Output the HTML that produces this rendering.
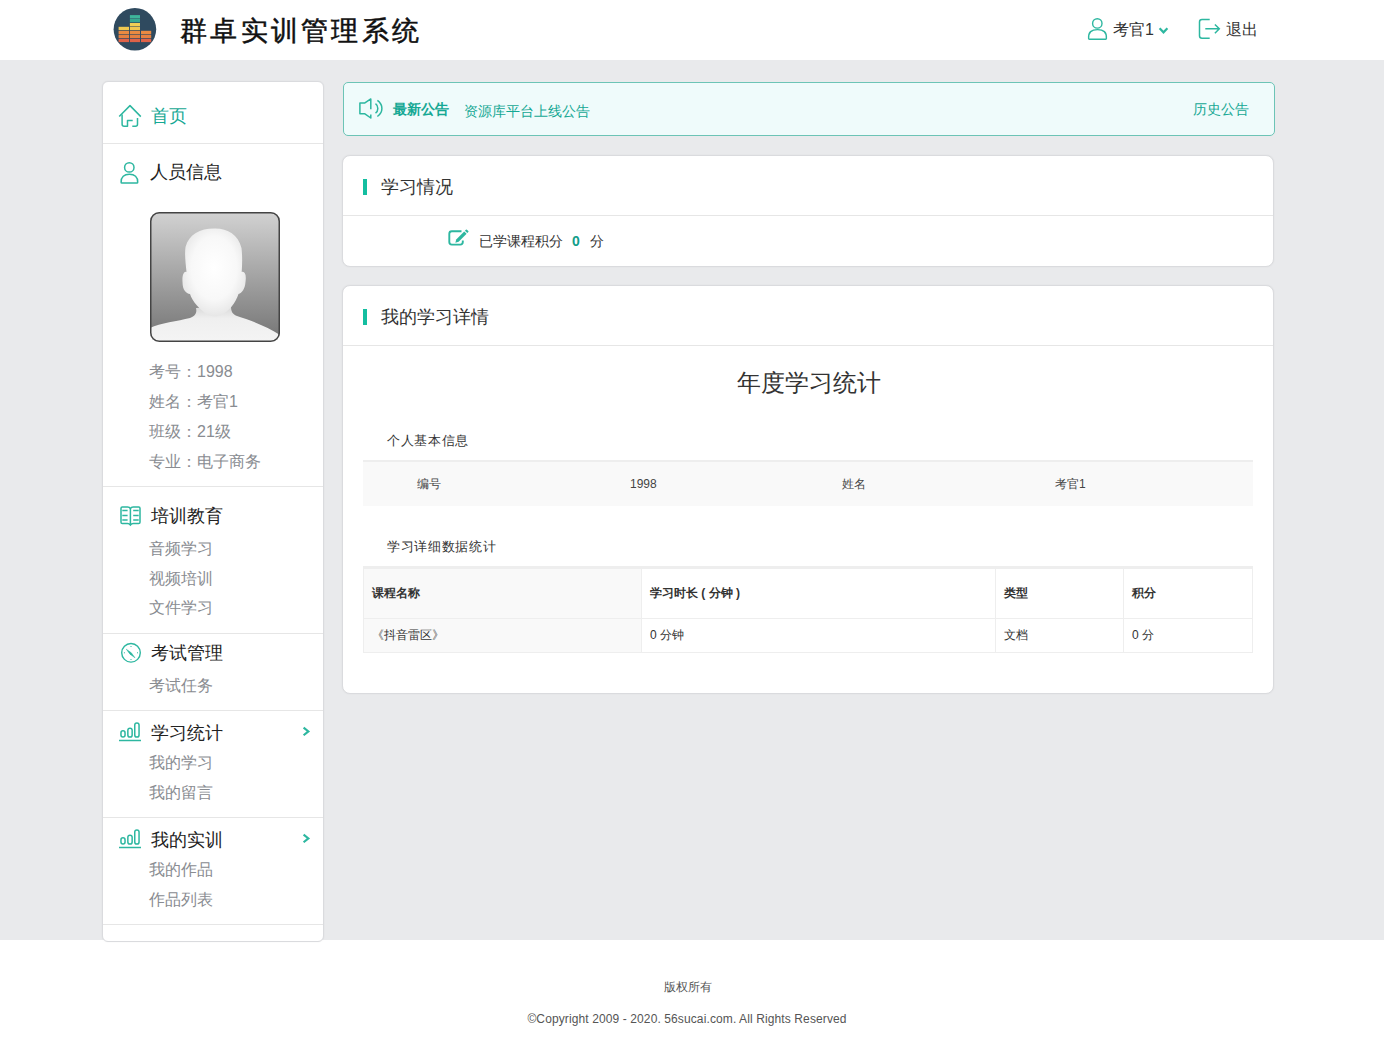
<!DOCTYPE html>
<html><head><meta charset="utf-8">
<style>
*{margin:0;padding:0;box-sizing:border-box}
html,body{width:1384px;height:1040px;overflow:hidden;background:#fff;font-family:"Liberation Sans",sans-serif;color:#333}
.abs{position:absolute}
#header{position:absolute;left:0;top:0;width:1384px;height:60px;background:#fff}
#body{position:absolute;left:0;top:60px;width:1384px;height:880px;background:#e9eaec}
#footer{position:absolute;left:0;top:940px;width:1384px;height:100px;background:#fff}
.title{position:absolute;left:180px;top:11px;font-family:"Liberation Serif",serif;font-weight:normal;font-size:27px;line-height:40px;color:#111;letter-spacing:3.3px;-webkit-text-stroke:0.5px #111;white-space:nowrap}
.side{position:absolute;left:102px;top:81px;width:222px;height:861px;background:#fff;border:1px solid #dadbde;border-radius:6px;box-shadow:0 0 2px rgba(0,0,0,0.06)}
.sep{position:absolute;left:0;width:220px;height:1px;background:#e6e6e6}
.nav{position:absolute;font-size:18px;line-height:24px;white-space:nowrap;color:#222}
.sub{position:absolute;font-size:16px;line-height:20px;white-space:nowrap;color:#898c91}
.info{position:absolute;font-size:16px;line-height:20px;white-space:nowrap;color:#898c91}
.card{position:absolute;left:342px;width:932px;background:#fff;border:1px solid #dadbde;border-radius:8px;box-shadow:0 0 2px rgba(0,0,0,0.06)}
.ctitle{position:absolute;left:38px;font-size:18px;line-height:24px;color:#333;white-space:nowrap}
.bar{position:absolute;left:20px;width:4px;height:16px;background:#14bea0}
.t12{font-size:12px;line-height:16px;white-space:nowrap;position:absolute}
.t14{font-size:14px;line-height:18px;white-space:nowrap;position:absolute}
</style></head><body>
<div id="header">
  <svg class="abs" style="left:105px;top:0px" width="60" height="60" viewBox="0 0 60 60">
    <circle cx="29.9" cy="29.3" r="21.3" fill="#2f4a5f"/>
    <g>
    <rect x="24.9" y="15.1" width="10.1" height="3.4" fill="#3eb59b"/>
    <rect x="24.9" y="19" width="10.1" height="3.3" fill="#37a78f"/>
    <rect x="24.9" y="23" width="10.1" height="3.3" fill="#f0cf55"/>
    <rect x="13.6" y="26.8" width="10.4" height="3.3" fill="#f0c850"/>
    <rect x="24.9" y="26.8" width="10.1" height="3.3" fill="#f0c850"/>
    <rect x="13.6" y="30.8" width="10.4" height="3.3" fill="#e98a42"/>
    <rect x="24.9" y="30.8" width="10.1" height="3.3" fill="#e98a42"/>
    <rect x="36" y="30.8" width="10.2" height="3.3" fill="#e98a42"/>
    <rect x="13.6" y="34.7" width="10.4" height="3.3" fill="#e58040"/>
    <rect x="24.9" y="34.7" width="10.1" height="3.3" fill="#e58040"/>
    <rect x="36" y="34.7" width="10.2" height="3.3" fill="#e58040"/>
    <rect x="13.6" y="38.7" width="10.4" height="3.4" fill="#df6248"/>
    <rect x="24.9" y="38.7" width="10.1" height="3.4" fill="#df6248"/>
    <rect x="36" y="38.7" width="10.2" height="3.4" fill="#df6248"/>
    </g>
  </svg>
  <div class="title">群卓实训管理系统</div>
  <svg class="abs" style="left:1080px;top:10px" width="100" height="40" viewBox="0 0 100 40" fill="none" stroke="#2db7a0" stroke-width="1.4">
    <circle cx="17.3" cy="13.4" r="4.7"/>
    <path d="M8.6 28.6 C8.2 22 11.5 19.6 17.5 19.6 C23.5 19.6 26.8 22 26.4 28.6 Q26.4 29.3 25.6 29.3 H9.4 Q8.6 29.3 8.6 28.6 Z"/>
    <path d="M79.6 18.3 L83.5 22.3 L87.4 18.3" stroke-width="2.2"/>
  </svg>
  <div class="t14" style="left:1113px;top:20px;font-size:16px;line-height:20px;color:#333">考官1</div>
  <svg class="abs" style="left:1190px;top:10px" width="40" height="40" viewBox="0 0 40 40" fill="none" stroke="#2db7a0" stroke-width="1.5">
    <path d="M19.7 9.5 H12 Q9.5 9.5 9.5 12 V25.8 Q9.5 28.3 12 28.3 H19.7"/>
    <path d="M15.3 18.8 H29.3 M24.9 14.5 L29.3 18.8 L24.9 23.2"/>
  </svg>
  <div class="t14" style="left:1226px;top:20px;font-size:16px;line-height:20px;color:#333">退出</div>
</div>
<div id="body"></div>
<div id="footer">
  <div class="t12" style="left:-4px;width:1384px;text-align:center;top:39px;color:#555">版权所有</div>
  <div class="t12" style="left:-5px;width:1384px;text-align:center;top:71px;color:#555;letter-spacing:0.11px">©Copyright 2009 - 2020. 56sucai.com. All Rights Reserved</div>
</div>

<div class="side">
  <div class="nav" style="left:48px;top:22px;color:#15a894">首页</div>
  <div class="sep" style="top:61px"></div>
  <div class="nav" style="left:47px;top:78px">人员信息</div>
  <svg class="abs" style="left:47px;top:130px" width="130" height="130" viewBox="0 0 130 130">
    <defs>
      <linearGradient id="bg" x1="0" y1="0" x2="0" y2="1"><stop offset="0" stop-color="#d2d2d2"/><stop offset="1" stop-color="#747474"/></linearGradient>
      <radialGradient id="face" cx="0.5" cy="0.45" r="0.6"><stop offset="0" stop-color="#ffffff"/><stop offset="0.6" stop-color="#f8f8f8"/><stop offset="1" stop-color="#e2e2e2"/></radialGradient>
      <linearGradient id="sh" x1="0" y1="0" x2="0" y2="1"><stop offset="0" stop-color="#d8d8d8"/><stop offset="0.35" stop-color="#efefef"/><stop offset="1" stop-color="#f4f4f4"/></linearGradient>
      <clipPath id="cp"><rect x="0" y="0" width="130" height="130" rx="9"/></clipPath>
    </defs>
    <g clip-path="url(#cp)">
      <rect width="130" height="130" fill="url(#bg)"/>
      <path d="M46 96 C47 100 46 104 40 106 C28 109 10 111 0 116 V130 H130 V123 C118 115 100 108 87 104 C82 102 81 99 81 94 Z" fill="url(#sh)"/>
      <path d="M64 16.5 C77 16 88 22 91.5 36 C92.5 45 92.2 53 91.7 60 C95 59 96.5 63 95.5 70 C95 77 92 81 88.5 82 C86 90 79 100 70 103.5 C66 104.8 62 104.8 58 103 C50 98 42 89 40 82 C36 81.5 32.5 78 32.5 70 C32 63 34 59 36.5 60 C35.5 50 34.5 42 35.5 35 C39 22 50 16.5 64 16.5 Z" fill="url(#face)"/>
    </g>
    <rect x="0.75" y="0.75" width="128.5" height="128.5" rx="8.5" fill="none" stroke="#444" stroke-width="1.5"/>
  </svg>
  <div class="info" style="left:46px;top:280px">考号：1998</div>
  <div class="info" style="left:46px;top:310px">姓名：考官1</div>
  <div class="info" style="left:46px;top:340px">班级：21级</div>
  <div class="info" style="left:46px;top:370px">专业：电子商务</div>
  <div class="sep" style="top:404px"></div>
  <div class="nav" style="left:48px;top:422px">培训教育</div>
  <div class="sub" style="left:46px;top:457px">音频学习</div>
  <div class="sub" style="left:46px;top:487px">视频培训</div>
  <div class="sub" style="left:46px;top:516px">文件学习</div>
  <div class="sep" style="top:551px"></div>
  <div class="nav" style="left:48px;top:559px">考试管理</div>
  <div class="sub" style="left:46px;top:594px">考试任务</div>
  <div class="sep" style="top:628px"></div>
  <div class="nav" style="left:48px;top:639px">学习统计</div>
  <div class="sub" style="left:46px;top:671px">我的学习</div>
  <div class="sub" style="left:46px;top:701px">我的留言</div>
  <div class="sep" style="top:735px"></div>
  <div class="nav" style="left:48px;top:746px">我的实训</div>
  <div class="sub" style="left:46px;top:778px">我的作品</div>
  <div class="sub" style="left:46px;top:808px">作品列表</div>
  <div class="sep" style="top:842px"></div>
</div>


<div class="abs" style="left:343px;top:82px;width:932px;height:54px;background:#effbfb;border:1px solid #6cc4b6;border-radius:5px">
  <div class="t14" style="left:49px;top:17px;font-weight:bold;color:#15a894">最新公告</div>
  <div class="t14" style="left:120px;top:19px;color:#15a894">资源库平台上线公告</div>
  <div class="t14" style="left:849px;top:17px;color:#15a894">历史公告</div>
</div>

<div class="card" style="top:155px;height:112px">
  <div class="bar" style="top:23px"></div>
  <div class="ctitle" style="top:19px">学习情况</div>
  <div class="sep" style="top:59px;width:930px"></div>
  <div class="t14" style="left:136px;top:76px;color:#333">已学课程积分</div>
  <div class="t14" style="left:229px;top:76px;color:#119e8a;font-weight:bold">0</div>
  <div class="t14" style="left:247px;top:76px;color:#333">分</div>
</div>

<div class="card" style="top:285px;height:409px">
  <div class="bar" style="top:23px"></div>
  <div class="ctitle" style="top:19px">我的学习详情</div>
  <div class="sep" style="top:59px;width:930px"></div>
  <div class="abs" style="left:1px;width:929px;top:82px;text-align:center;font-size:24px;line-height:30px;color:#333">年度学习统计</div>
  <div class="t14" style="left:44px;top:146px;color:#333;font-size:13px;letter-spacing:0.7px">个人基本信息</div>
  <div class="abs" style="left:20px;top:174px;width:890px;height:46px;background:#f9f9f9;border-top:2px solid #eee"></div>
  <div class="t12" style="left:74px;top:190px;color:#444">编号</div>
  <div class="t12" style="left:287px;top:190px;color:#444">1998</div>
  <div class="t12" style="left:499px;top:190px;color:#444">姓名</div>
  <div class="t12" style="left:712px;top:190px;color:#444">考官1</div>
  <div class="t14" style="left:44px;top:252px;color:#333;font-size:13px;letter-spacing:0.7px">学习详细数据统计</div>
  <div class="abs" style="left:20px;top:280px;width:890px;height:87px;border:1px solid #eee;border-top:3px solid #eee">
    <div class="abs" style="left:0;top:0;width:278px;height:83px;background:#f9f9f9"></div>
    <div class="abs" style="left:0;top:49px;width:888px;height:1px;background:#eee"></div>
    <div class="abs" style="left:277px;top:0;width:1px;height:83px;background:#eee"></div>
    <div class="abs" style="left:631px;top:0;width:1px;height:83px;background:#eee"></div>
    <div class="abs" style="left:759px;top:0;width:1px;height:83px;background:#eee"></div>
    <div class="t12" style="left:8px;top:16px;font-weight:bold;color:#333">课程名称</div>
    <div class="t12" style="left:286px;top:16px;font-weight:bold;color:#333">学习时长 ( 分钟 )</div>
    <div class="t12" style="left:640px;top:16px;font-weight:bold;color:#333">类型</div>
    <div class="t12" style="left:768px;top:16px;font-weight:bold;color:#333">积分</div>
    <div class="t12" style="left:8px;top:58px;color:#333">《抖音雷区》</div>
    <div class="t12" style="left:286px;top:58px;color:#333">0 分钟</div>
    <div class="t12" style="left:640px;top:58px;color:#333">文档</div>
    <div class="t12" style="left:768px;top:58px;color:#333">0 分</div>
  </div>
</div>
<!-- sidebar icons -->
<svg class="abs" style="left:110px;top:95px" width="40" height="40" viewBox="0 0 40 40" fill="none" stroke="#2db7a0" stroke-width="1.5" stroke-linejoin="round">
  <path d="M9.2 21.5 L20 10.6 L30.8 21.6"/>
  <path d="M12.1 19.4 V29.3 Q12.1 31.3 14.1 31.3 H17.5 V25.6 H22.7"/>
  <path d="M22.3 31.3 H25.5 Q27.5 31.3 27.5 29.3 V23"/>
</svg>
<svg class="abs" style="left:110px;top:153px" width="40" height="40" viewBox="0 0 40 40" fill="none" stroke="#2db7a0" stroke-width="1.5">
  <circle cx="19.3" cy="14.4" r="4.7"/>
  <path d="M11.1 29.3 C10.9 24 14.2 21.3 19.4 21.3 C24.6 21.3 27.9 24 27.7 29.3 Q27.7 30.1 26.9 30.1 H11.9 Q11.1 30.1 11.1 29.3 Z"/>
</svg>
<svg class="abs" style="left:110px;top:496px" width="40" height="40" viewBox="0 0 40 40" fill="none" stroke="#2db7a0" stroke-width="1.5">
  <path d="M11 12.2 Q11 10.9 12.3 10.9 H17.6 Q19.6 10.9 20.4 12.6 Q21.2 10.9 23.2 10.9 H28.7 Q30 10.9 30 12.2 V26.2 Q30 27.5 28.7 27.5 H23.3 Q21.4 27.5 20.4 29 Q19.4 27.5 17.5 27.5 H12.3 Q11 27.5 11 26.2 Z"/>
  <path d="M20.4 12.6 V29"/>
  <path d="M12.3 14.6 H17.6 M12.3 19.4 H17.6 M12.3 24 H17.6 M23.2 14.6 H28.7 M23.2 19.4 H28.7 M23.2 24 H28.7"/>
</svg>
<svg class="abs" style="left:110px;top:633px" width="40" height="40" viewBox="0 0 40 40" fill="none" stroke="#2db7a0" stroke-width="1.4">
  <circle cx="21" cy="19.8" r="9.3"/>
  <path d="M16.3 16.2 L21.3 19.8 L25 24.8 L20 21.2 Z" fill="#2db7a0" stroke-width="0.5"/>
  <path d="M20.5 13.5 H21.5 M20.5 26.5 H21.5 M14.4 19.3 V20.3 M27.5 19.3 V20.3" stroke-width="1"/>
</svg>
<svg class="abs" style="left:110px;top:712px" width="40" height="40" viewBox="0 0 40 40" fill="none" stroke="#2db7a0" stroke-width="1.5">
  <rect x="10.95" y="18.85" width="4.1" height="6.2" rx="2.05"/>
  <rect x="17.85" y="16.15" width="4.3" height="8.9" rx="2.15"/>
  <rect x="24.75" y="10.95" width="4.3" height="14.1" rx="2.15"/>
  <path d="M9 28.5 H31"/>
</svg>
<svg class="abs" style="left:110px;top:819px" width="40" height="40" viewBox="0 0 40 40" fill="none" stroke="#2db7a0" stroke-width="1.5">
  <rect x="10.95" y="18.85" width="4.1" height="6.2" rx="2.05"/>
  <rect x="17.85" y="16.15" width="4.3" height="8.9" rx="2.15"/>
  <rect x="24.75" y="10.95" width="4.3" height="14.1" rx="2.15"/>
  <path d="M9 28.5 H31"/>
</svg>
<svg class="abs" style="left:295px;top:720px" width="20" height="20" viewBox="0 0 20 20" fill="none" stroke="#2db7a0" stroke-width="2.1" stroke-linejoin="miter">
  <path d="M8.6 7.6 L13.4 11.4 L8.6 15.3"/>
</svg>
<svg class="abs" style="left:295px;top:827px" width="20" height="20" viewBox="0 0 20 20" fill="none" stroke="#2db7a0" stroke-width="2.1" stroke-linejoin="miter">
  <path d="M8.6 7.6 L13.4 11.4 L8.6 15.3"/>
</svg>
<!-- notice icon -->
<svg class="abs" style="left:352px;top:90px" width="40" height="40" viewBox="0 0 40 40" fill="none" stroke="#2db7a0" stroke-width="1.5" stroke-linejoin="round">
  <path d="M18.8 19.2 V8.9 L12.9 12.9 H7.9 V23.8 H12.9 L18.8 28 V24.4"/>
  <path d="M23.5 13.7 C26.6 16 26.6 20.8 23.5 23.1"/>
  <path d="M25.4 10.4 C31.4 14.8 31.4 22.1 25.4 26.5"/>
</svg>
<!-- edit icon -->
<svg class="abs" style="left:440px;top:220px" width="40" height="40" viewBox="0 0 40 40" fill="none" stroke="#2db7a0" stroke-width="1.9">
  <path d="M21.5 11.2 H11.8 Q9.3 11.2 9.3 13.7 V22.1 Q9.3 24.6 11.8 24.6 H20.3 Q22.8 24.6 22.8 22.1 V20.4"/>
  <path d="M15.4 22.7 L16.2 19.4 L24.2 11.4 L26.6 13.8 L18.6 21.8 Z" fill="#2db7a0" stroke="none"/>
  <path d="M24.9 10.7 L25.9 9.7 Q26.4 9.2 26.9 9.7 L28.3 11.1 Q28.8 11.6 28.3 12.1 L27.3 13.1 Z" fill="#2db7a0" stroke="none"/>
</svg>
</body></html>
